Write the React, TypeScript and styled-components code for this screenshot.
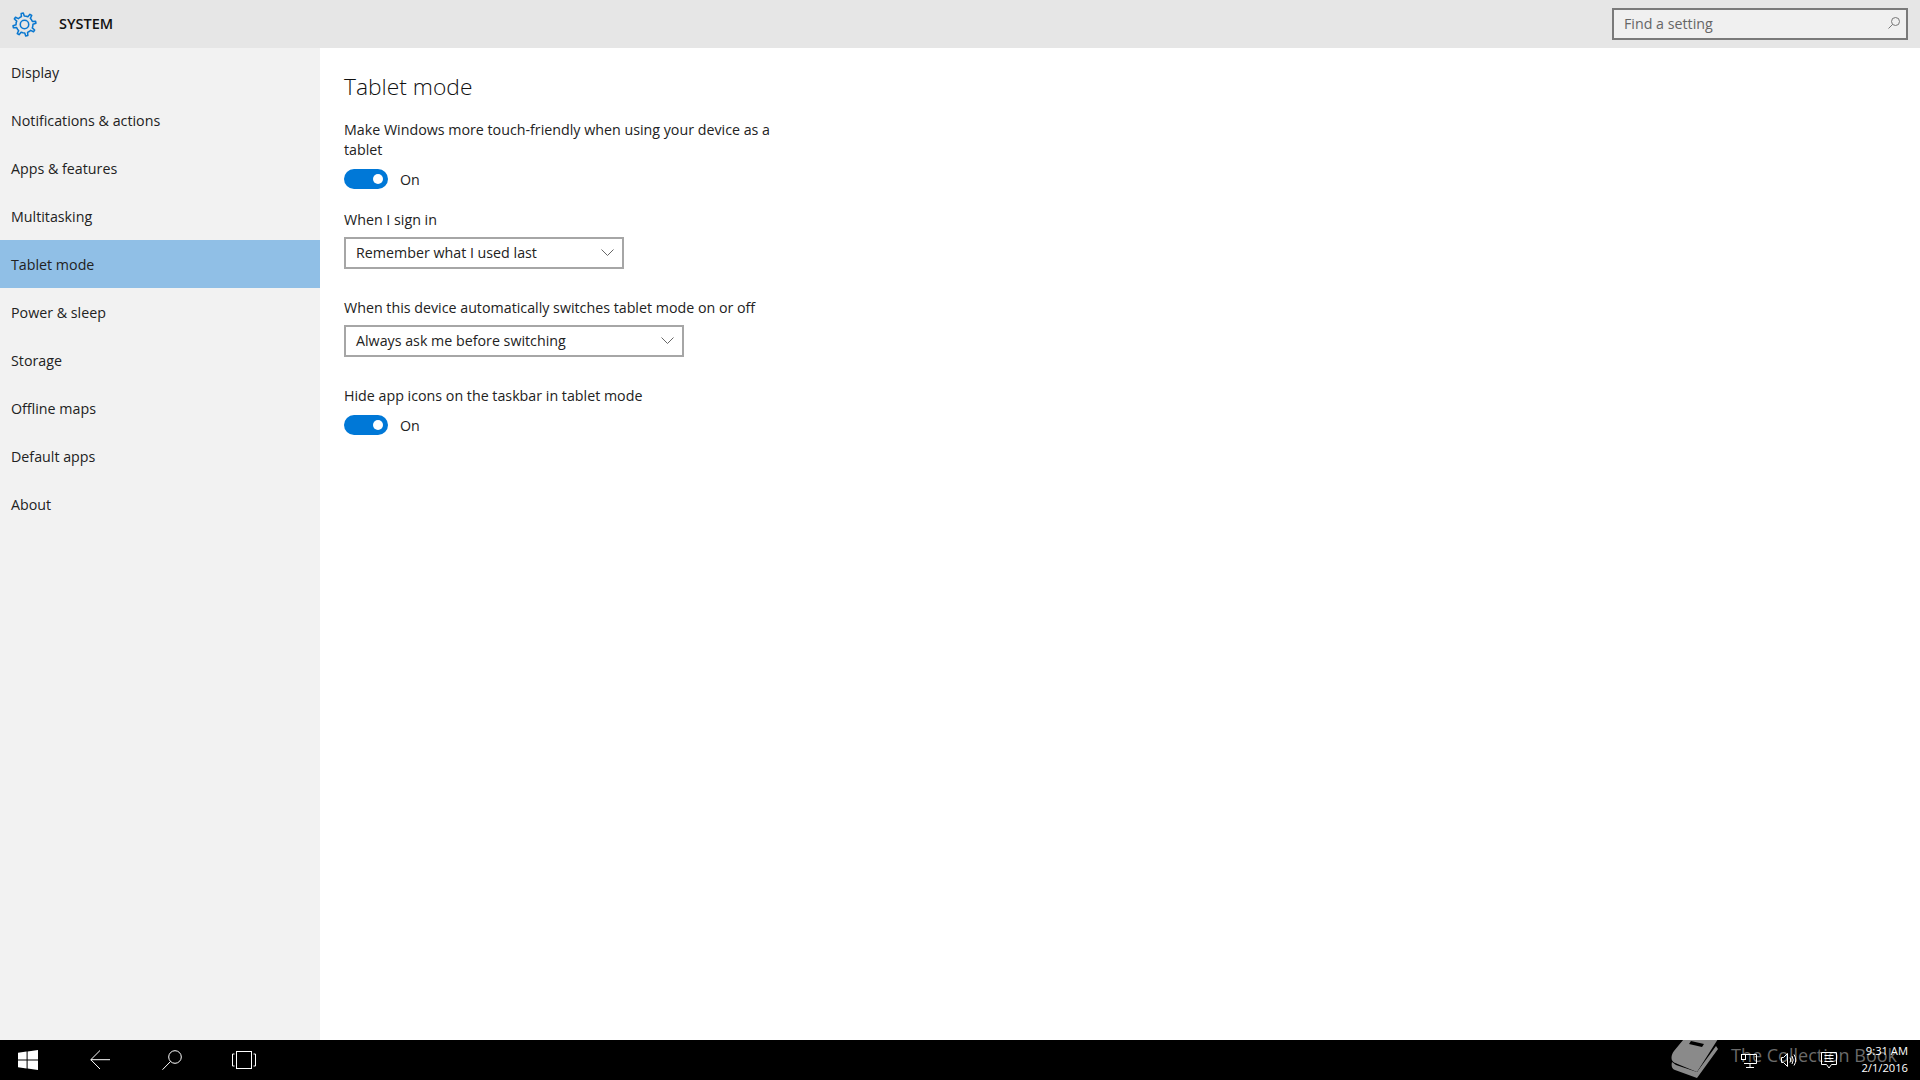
import React from 'react';
import styled, { createGlobalStyle } from 'styled-components';

const NAV_ITEMS = [
  'Display',
  'Notifications & actions',
  'Apps & features',
  'Multitasking',
  'Tablet mode',
  'Power & sleep',
  'Storage',
  'Offline maps',
  'Default apps',
  'About'
];

const GlobalStyle = createGlobalStyle`
  html, body {
    margin: 0;
    padding: 0;
    background: #fff;
  }

  body {
    color: #222;
    font-family: 'Open Sans', 'Noto Sans', sans-serif;
    font-size: 14.25px;
  }
`;

const Page = styled.div`
  display: flex;
  flex-direction: column;
  height: 1080px;
  overflow: hidden;
  width: 1920px;
`;

const Header = styled.header`
  align-items: center;
  background: #e6e6e6;
  display: flex;
  flex: 0 0 48px;
  justify-content: space-between;
  padding: 0 12px;
`;

const Brand = styled.div`
  align-items: center;
  display: flex;
  gap: 22px;
`;

const BrandTitle = styled.span`
  color: #111;
  font-size: 14.5px;
  font-weight: 600;
  padding-bottom: 1px;
`;

const SearchBox = styled.div`
  align-items: center;
  background: #f0f0f0;
  border: 2px solid #7a7a7a;
  box-sizing: border-box;
  color: #666;
  display: flex;
  height: 32px;
  justify-content: space-between;
  padding: 0 6px 2px 10px;
  width: 296px;
`;

const Body = styled.div`
  display: flex;
  flex: 1;
  min-height: 0;
`;

const Sidebar = styled.nav`
  background: #f2f2f2;
  display: flex;
  flex: 0 0 320px;
  flex-direction: column;
`;

const NavItem = styled.div<{ $active?: boolean }>`
  align-items: center;
  background: ${({ $active }) => ($active ? '#90bfe6' : 'transparent')};
  display: flex;
  height: 48px;
  padding-left: 11px;
`;

const Content = styled.main`
  background: #fff;
  flex: 1;
  padding: 24px 0 0 24px;
`;

const Title = styled.h1`
  color: #111;
  font-size: 22.8px;
  font-weight: 300;
  line-height: 30px;
  margin: 0 0 18px;
`;

const Label = styled.div`
  line-height: 20px;
  width: 440px;
`;

const ToggleRow = styled.div`
  align-items: center;
  display: flex;
  gap: 12px;
  height: 20px;
  margin-top: 9px;
`;

const ToggleTrack = styled.div`
  align-items: center;
  background: #0078d7;
  border-radius: 10px;
  box-sizing: border-box;
  display: flex;
  height: 20px;
  justify-content: flex-end;
  padding-right: 5px;
  width: 44px;
`;

const ToggleKnob = styled.div`
  background: #fff;
  border-radius: 50%;
  height: 10px;
  width: 10px;
`;

const Section = styled.section<{ $gap: number }>`
  margin-top: ${({ $gap }) => $gap}px;
`;

const Select = styled.div<{ $width: number }>`
  align-items: center;
  background: #fff;
  border: 2px solid #a6a6a6;
  box-sizing: border-box;
  display: flex;
  height: 32px;
  justify-content: space-between;
  margin-top: 7px;
  padding: 0 8px 2px 10px;
  width: ${({ $width }) => $width}px;
`;

const Taskbar = styled.footer`
  align-items: center;
  background: #000;
  display: flex;
  flex: 0 0 40px;
  overflow: hidden;
  position: relative;
`;

const TaskbarLeft = styled.div`
  align-items: center;
  display: flex;
  gap: 52px;
  padding-left: 18px;
`;

const TaskButton = styled.div`
  align-items: center;
  display: flex;
  justify-content: center;
  width: 20px;

  svg {
    flex-shrink: 0;
  }
`;

const Tray = styled.div`
  align-items: center;
  display: flex;
  gap: 24px;
  margin-left: auto;
  padding-right: 12px;
  position: relative;
`;

const Clock = styled.div`
  color: #fff;
  font-size: 11.2px;
  line-height: 17px;
  padding-bottom: 2px;
  text-align: right;
`;

const Watermark = styled.div`
  align-items: center;
  bottom: 0;
  color: #6a6a6a;
  display: flex;
  font-size: 18px;
  gap: 12px;
  position: absolute;
  right: 23px;
  top: 0;
`;

const WatermarkText = styled.span`
  margin-bottom: 11px;
`;

const Chevron = () => (
  <svg fill='none' height='7' stroke='#666' viewBox='0 0 13 7' width='13'>
    <path d='M.5.5l6 6 6-6' />
  </svg>
);

const Toggle = () => (
  <ToggleRow>
    <ToggleTrack>
      <ToggleKnob />
    </ToggleTrack>
    <span>On</span>
  </ToggleRow>
);

// eight rounded teeth, walked around the centre
const gearPath = (): string => {
  const points: string[] = [];

  for (let i = 0; i < 8; i++) {
    const base = (i * Math.PI) / 4 - Math.PI / 8;
    const steps: [number, number][] = [[8.8, -0.2], [8.8, 0.02], [12, 0.1], [12, 0.285], [8.8, 0.365], [8.8, 0.585]];

    steps.forEach(([radius, offset]) => {
      const x = 13 + radius * Math.cos(base + offset);
      const y = 13 + radius * Math.sin(base + offset);

      points.push(`${x.toFixed(2)} ${y.toFixed(2)}`);
    });
  }

  return `M${points.join('L')}Z`;
};

const GearIcon = () => (
  <svg fill='none' height='25' stroke='#0a78d0' strokeLinejoin='round' strokeWidth='1.6' viewBox='0 0 26 26' width='25'>
    <circle cx='13' cy='13' r='4.4' />
    <path d={gearPath()} />
  </svg>
);

const BookIcon = () => (
  <svg height='40' viewBox='0 0 50 40' width='50'>
    <path d='M19 -6L49 -1 28 32 6 23C1 21 2 15 5 11z' fill='#8a8a8a' />
    <path d='M6 24c5 3 15 7 22 10L47 7' fill='none' stroke='#000' strokeWidth='2' />
    <path d='M3 22c-1 4 0 7 3 8l22 8 21-29-2-3-19 26L7 25z' fill='#8a8a8a' />
    <path d='M22 1l13 3-2 3-13-3z' fill='#000' />
  </svg>
);

function App (): React.ReactElement {
  return (
    <Page>
      <GlobalStyle />
      <Header>
        <Brand>
          <GearIcon />
          <BrandTitle>SYSTEM</BrandTitle>
        </Brand>
        <SearchBox>
          Find a setting
          <svg fill='none' height='12' stroke='#777' viewBox='0 0 12 12' width='12'>
            <circle cx='7.500' cy='4.500' r='4' />
            <path d='M4.600 7.400L.5 11.500' />
          </svg>
        </SearchBox>
      </Header>
      <Body>
        <Sidebar>
          {NAV_ITEMS.map((item) => (
            <NavItem
              $active={item === 'Tablet mode'}
              key={item}
            >
              {item}
            </NavItem>
          ))}
        </Sidebar>
        <Content>
          <Title>Tablet mode</Title>
          <Label>Make Windows more touch-friendly when using your device as a tablet</Label>
          <Toggle />
          <Section $gap={21}>
            <Label>When I sign in</Label>
            <Select $width={280}>
              Remember what I used last
              <Chevron />
            </Select>
          </Section>
          <Section $gap={29}>
            <Label>When this device automatically switches tablet mode on or off</Label>
            <Select $width={340}>
              Always ask me before switching
              <Chevron />
            </Select>
          </Section>
          <Section $gap={29}>
            <Label>Hide app icons on the taskbar in tablet mode</Label>
            <Toggle />
          </Section>
        </Content>
      </Body>
      <Taskbar>
        <TaskbarLeft>
          <TaskButton>
            <svg fill='#fff' height='20' viewBox='0 0 20 20' width='20'>
              <path d='M0 2.800l8.600-1.200v7.800H0zM9.600 1.500L20 0v9.400H9.600zM0 10.500h8.600v7.900L0 17.200zM9.600 10.500H20V20L9.600 18.500z' />
            </svg>
          </TaskButton>
          <TaskButton>
            <svg fill='none' height='20' stroke='#fff' viewBox='0 0 20 20' width='20'>
              <path d='M10 .5L.8 9.700 10 19M.8 9.700H20' />
            </svg>
          </TaskButton>
          <TaskButton>
            <svg fill='none' height='20' stroke='#fff' viewBox='0 0 20 20' width='20'>
              <circle cx='13' cy='7' r='6.300' />
              <path d='M8.500 11.500L.5 19.700' />
            </svg>
          </TaskButton>
          <TaskButton>
            <svg fill='none' height='18' stroke='#fff' viewBox='0 0 24 18' width='24'>
              <rect height='17' width='15' x='4.500' y='.5' />
              <path d='M2.500 3H.5v12h2M21.500 3h2v12h-2' />
            </svg>
          </TaskButton>
        </TaskbarLeft>
        <Watermark>
          <BookIcon />
          <WatermarkText>The Collection Book</WatermarkText>
        </Watermark>
        <Tray>
          <svg fill='none' height='15' stroke='#fff' viewBox='0 0 16 15' width='16'>
            <path d='M3 1.500h12.500v9H3M9 10.500v4M5 14.500h8' />
            <rect fill='#000' height='5' width='4' x='.5' y='1.500' />
          </svg>
          <svg fill='none' height='14' stroke='#fff' viewBox='0 0 16 14' width='16'>
            <path d='M.5 4.500h2l4-4v13l-4-4h-2zM9 4.500q1.500 2.500 0 5M11 3q2.500 4 0 8M13 1.500q3.500 5.500 0 11' />
          </svg>
          <svg fill='none' height='17' stroke='#fff' viewBox='0 0 16 17' width='16'>
            <path d='M.5.5h15v12h-5L8 16l-2.500-3.500h-5zM3.500 3.500h9M3.500 6.500h9M3.500 9.500h9' />
          </svg>
          <Clock>
            9:31 AM
            <br />
            2/1/2016
          </Clock>
        </Tray>
      </Taskbar>
    </Page>
  );
}

export default App;
